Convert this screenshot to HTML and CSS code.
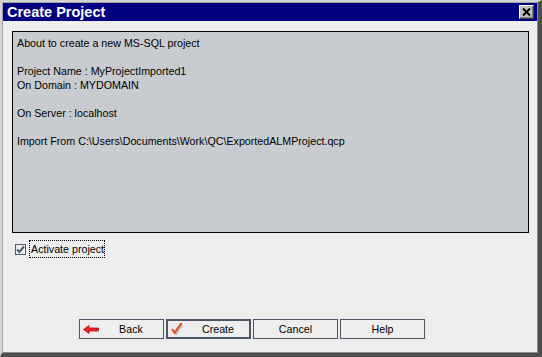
FILE: index.html
```html
<!DOCTYPE html>
<html lang="en">
<head>
  <meta charset="UTF-8" />
  <title>Create Project</title>
  <link rel="stylesheet" href="styles.css">
</head>
<body>

  <div class="window">
    <div class="titlebar">
      <span class="title">Create Project</span>
      <button class="close" type="button">
        <svg width="9" height="8" viewBox="0 0 9 8"><path d="M1 0.5 L8 7.5 M8 0.5 L1 7.5" stroke="#000" stroke-width="2"/></svg>
      </button>
    </div>

    <div class="dialog-body">
      <div class="summary">
        <p>About to create a new MS-SQL project</p>
        <p>Project Name : MyProjectImported1<br>On Domain : MYDOMAIN</p>
        <p>On Server : localhost</p>
        <p>Import From C:\Users\Documents\Work\QC\ExportedALMProject.qcp</p>
      </div>

      <label class="activate">
        <span class="check-box">
          <svg width="9" height="9" viewBox="0 0 9 9"><path d="M1 4.5 L3.5 7 L8 1.5" fill="none" stroke="#4b5a6e" stroke-width="2"/></svg>
        </span>
        <span class="activate-text">Activate project</span>
      </label>

      <div class="buttons">
        <button class="btn" type="button">
          <span class="btn-icon">
            <svg width="16" height="9" viewBox="0 0 16 9"><path d="M0.5 4.5 L6 0.5 L6 3 L15.5 3 L15.5 6 L6 6 L6 8.5 Z" fill="#ee2222" stroke="#b01010" stroke-width="0.8"/></svg>
          </span>
          <span class="btn-label">Back</span>
        </button>
        <button class="btn btn-default" type="button">
          <span class="btn-icon">
            <svg width="14" height="14" viewBox="0 0 14 14">
              <path d="M2.5 8.5 L5 12 L11.5 2.5" fill="none" stroke="#b8b8b8" stroke-width="1.6"/>
              <path d="M1 7 L3.6 10.8 L10.5 1" fill="none" stroke="#e84a12" stroke-width="2"/>
            </svg>
          </span>
          <span class="btn-label">Create</span>
        </button>
        <button class="btn" type="button"><span class="btn-label">Cancel</span></button>
        <button class="btn" type="button"><span class="btn-label">Help</span></button>
      </div>
    </div>
  </div>

</body>
</html>
```

FILE: styles.css
```css
* {
  box-sizing: border-box;
  margin: 0;
  padding: 0;
}

body {
  font-family: "Liberation Sans", Arial, sans-serif;
  font-size: 10.7px;
  color: #000000;
  background-color: #eeeeee;
}

.window {
  width: 542px;
  height: 357px;
  display: flex;
  flex-direction: column;
  padding: 1px;
  background-color: #eeeeee;
  border-style: solid;
  border-width: 2px 4px 4px 2px;
  border-color: #d4d4d4 #4e4e4e #4e4e4e #d4d4d4;
  box-shadow: inset 1px 1px #a4a4a4, inset -1px -1px #8a8a8a;
}

.titlebar {
  height: 18px;
  display: flex;
  align-items: center;
  justify-content: space-between;
  background-color: #000080;
  padding: 0 3px 0 4px;
}

.title {
  color: #ffffff;
  font-size: 14.5px;
  font-weight: bold;
  line-height: 18px;
}

.close {
  width: 15px;
  height: 14px;
  display: flex;
  align-items: center;
  justify-content: center;
  background-color: #c0c0c0;
  border: 1px solid;
  border-color: #ffffff #404040 #404040 #ffffff;
  box-shadow: inset -1px -1px #808080;
}

.dialog-body {
  flex: 1;
  display: flex;
  flex-direction: column;
  padding: 10px 8px 13px 9px;
}

.summary {
  height: 202px;
  background-color: #c8ccd0;
  border: 1px solid #000000;
  padding: 4px 4px;
  line-height: 14px;
}

.summary p {
  margin-bottom: 14px;
}

.activate {
  display: flex;
  align-items: center;
  margin-top: 7px;
  margin-left: 3px;
  height: 18px;
}

.check-box {
  width: 11px;
  height: 11px;
  display: flex;
  align-items: center;
  justify-content: center;
  border: 1px solid #4b5a6e;
  background-color: #eeeeee;
  margin-top: 1px;
}

.activate-text {
  margin-left: 3px;
  padding: 0 0 0 1px;
  line-height: 16px;
  border: 1px dotted #000000;
}

.buttons {
  margin-top: auto;
  display: flex;
  gap: 2px;
  padding-left: 67px;
}

.btn {
  width: 85px;
  height: 20px;
  display: flex;
  align-items: center;
  background-color: #eeeeee;
  border: 1px solid #4b5566;
  font-family: inherit;
  font-size: 10.7px;
  color: #000000;
  line-height: 18px;
}

.btn-default {
  border-width: 2px;
}

.btn-icon {
  width: 16px;
  margin-left: 3px;
  display: flex;
  align-items: center;
}

.btn-label {
  flex: 1;
  text-align: center;
}
```
